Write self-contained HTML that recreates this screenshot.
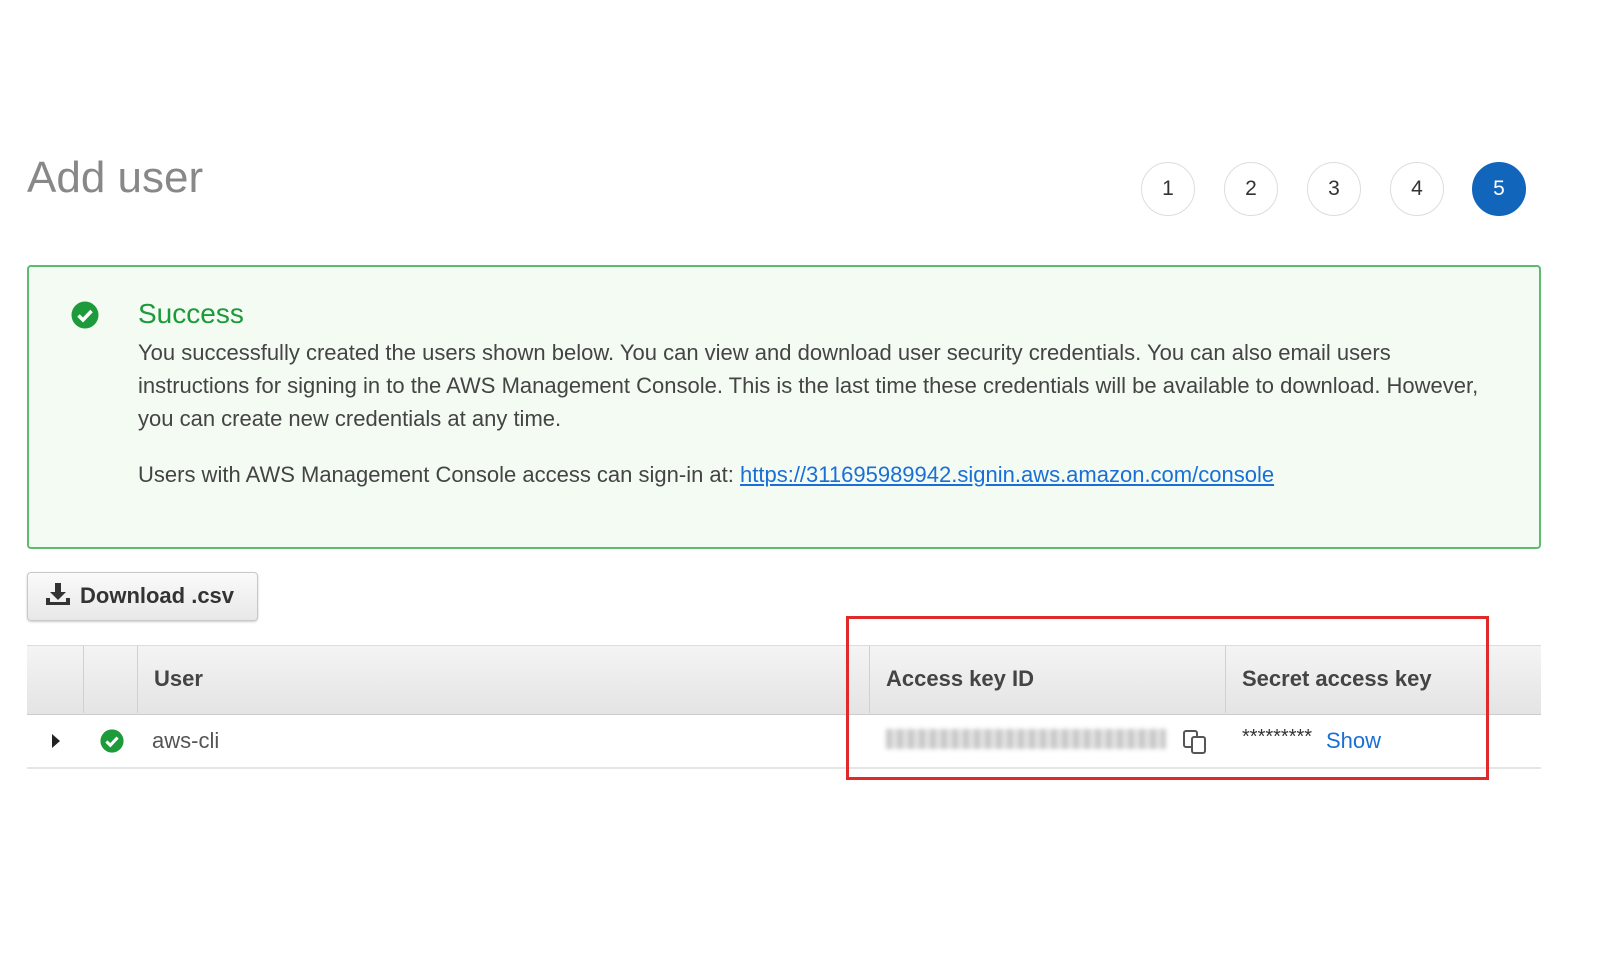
<!DOCTYPE html>
<html><head><meta charset="utf-8"><style>
body{margin:0;width:1600px;height:960px;background:#fff;font-family:"Liberation Sans",Arial,sans-serif;position:relative;overflow:hidden;color:#444}
.a{position:absolute}
.step{position:absolute;top:162px;width:54px;height:54px;border-radius:50%;border:1px solid #ddd;box-sizing:border-box;text-align:center;line-height:52px;font-size:21px;color:#333;background:#fff}
</style></head><body>
<div class="a" style="left:27px;top:153px;font-size:44px;color:#888">Add user</div>
<div class="step" style="left:1141px">1</div>
<div class="step" style="left:1224px">2</div>
<div class="step" style="left:1307px">3</div>
<div class="step" style="left:1390px">4</div>
<div class="step" style="left:1472px;background:#1166bb;border-color:#1166bb;color:#fff">5</div>

<div class="a" style="left:27px;top:265px;width:1514px;height:284px;box-sizing:border-box;border:2px solid #5dbb6f;border-radius:4px;background:#f3fbf3"></div>
<svg class="a" style="left:71px;top:301px" width="28" height="28" viewBox="0 0 28 28"><circle cx="14" cy="14" r="13.5" fill="#1d9a3a"/><path d="M7.5 14.5l4.5 4.5 8.5-9" stroke="#fff" stroke-width="3.5" fill="none"/></svg>
<div class="a" style="left:138px;top:298px;font-size:28px;color:#1d9a3a">Success</div>
<div class="a" style="left:138px;top:336px;width:1360px;font-size:22px;line-height:33px;color:#444">You successfully created the users shown below. You can view and download user security credentials. You can also email users instructions for signing in to the AWS Management Console. This is the last time these credentials will be available to download. However, you can create new credentials at any time.</div>
<div class="a" style="left:138px;top:458px;font-size:22px;line-height:33px;color:#444">Users with AWS Management Console access can sign-in at: <span style="color:#1a6fd6;text-decoration:underline">https://311695989942.signin.aws.amazon.com/console</span></div>

<div class="a" style="left:27px;top:572px;width:231px;height:49px;box-sizing:border-box;border:1px solid #c8c8c8;border-radius:4px;background:linear-gradient(#fafafa,#e8e8e8);box-shadow:0 1px 2px rgba(0,0,0,.2)"></div>
<svg class="a" style="left:45px;top:582px" width="26" height="24" viewBox="0 0 26 24"><path d="M10 1h6v9h5l-8 8-8-8h5z" fill="#333"/><path d="M1 16h4v4h16v-4h4v7H1z" fill="#333"/></svg>
<div class="a" style="left:80px;top:583px;font-size:22px;font-weight:bold;color:#333">Download .csv</div>

<div class="a" style="left:27px;top:645px;width:1514px;height:68px;background:linear-gradient(#f4f4f4,#e4e4e4);border-top:1px solid #ddd;border-bottom:1px solid #ccc"></div>
<div class="a" style="left:83px;top:646px;width:1px;height:67px;background:#d0d0d0"></div>
<div class="a" style="left:137px;top:646px;width:1px;height:67px;background:#d0d0d0"></div>
<div class="a" style="left:869px;top:646px;width:1px;height:67px;background:#d0d0d0"></div>
<div class="a" style="left:1225px;top:646px;width:1px;height:67px;background:#d0d0d0"></div>
<div class="a" style="left:154px;top:666px;font-size:22px;font-weight:bold;color:#444">User</div>
<div class="a" style="left:886px;top:666px;font-size:22px;font-weight:bold;color:#444">Access key ID</div>
<div class="a" style="left:1242px;top:666px;font-size:22px;font-weight:bold;color:#444">Secret access key</div>
<div class="a" style="left:27px;top:767px;width:1514px;height:2px;background:#e6e6e6"></div>
<svg class="a" style="left:51px;top:733px" width="10" height="16"><path d="M1 1l8 7-8 7z" fill="#222"/></svg>
<svg class="a" style="left:100px;top:729px" width="24" height="24" viewBox="0 0 28 28"><circle cx="14" cy="14" r="13.5" fill="#1d9a3a"/><path d="M7.5 14.5l4.5 4.5 8.5-9" stroke="#fff" stroke-width="3.5" fill="none"/></svg>
<div class="a" style="left:152px;top:728px;font-size:22px;color:#555">aws-cli</div>
<div class="a" style="left:886px;top:729px;width:280px;height:20px;background:repeating-linear-gradient(90deg,#bbb 0 6px,#ddd 6px 11px);filter:blur(2px);opacity:.8"></div>
<svg class="a" style="left:1181px;top:728px" width="28" height="28" viewBox="0 0 28 28"><rect x="3" y="3" width="13" height="16" rx="2" fill="none" stroke="#555" stroke-width="2"/><rect x="11" y="9" width="13" height="16" rx="2" fill="#fff" stroke="#555" stroke-width="2"/></svg>
<div class="a" style="left:1242px;top:726px;font-size:20px;color:#333">*********</div>
<div class="a" style="left:1326px;top:728px;font-size:22px;color:#1a6fd6">Show</div>

<div class="a" style="left:846px;top:616px;width:643px;height:164px;box-sizing:border-box;border:3px solid #e02a2a"></div>
</body></html>
